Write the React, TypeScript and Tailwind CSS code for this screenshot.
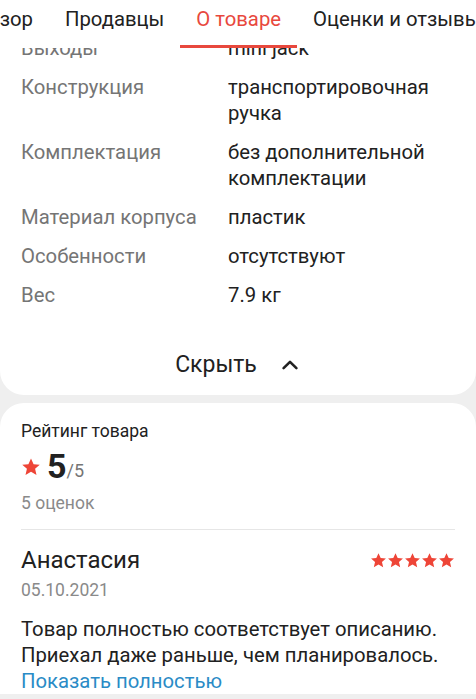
import React from 'react';

const specs: { label: string; value: string }[] = [
  { label: 'Выходы', value: 'mini jack' },
  { label: 'Конструкция', value: 'транспортировочная ручка' },
  { label: 'Комплектация', value: 'без дополнительной комплектации' },
  { label: 'Материал корпуса', value: 'пластик' },
  { label: 'Особенности', value: 'отсутствуют' },
  { label: 'Вес', value: '7.9 кг' },
];

function Star({ className }: { className?: string }) {
  return (
    <svg viewBox="0 0 24 24" className={className} fill="currentColor">
      <polygon points="12,1.8 15.1,8.6 22.5,9.3 16.9,14.2 18.6,21.5 12,17.6 5.4,21.5 7.1,14.2 1.5,9.3 8.9,8.6" />
    </svg>
  );
}

export default function App() {
  return (
    <div
      className="w-[476px] h-[699px] overflow-hidden bg-[#efefef] text-[#212121]"
      style={{ fontFamily: 'Roboto, "Noto Sans", sans-serif' }}
    >
      {/* tabs, scrolled so the first one is cut at the left edge */}
      <div className="relative z-10 h-[48px] bg-white flex items-stretch overflow-hidden text-[20.3px] whitespace-nowrap">
        <div className="w-[49px] shrink-0 flex justify-end overflow-hidden">
          <div className="pr-4 pt-[4px]">Обзор</div>
        </div>
        <div className="px-4 pt-[4px] shrink-0">Продавцы</div>
        <div className="px-4 pt-[4px] shrink-0 relative text-[#e8483d]">
          О товаре
          <div className="absolute left-0 right-0 bottom-0 h-[3px] bg-[#e8483d]" />
        </div>
        <div className="px-4 pt-[4px] shrink-0">Оценки и отзывы</div>
      </div>

      {/* specs card */}
      <div className="-mt-[13px] bg-white rounded-b-[24px] px-[21px]">
        <div className="flex flex-col gap-[13px] text-[20.3px] leading-[26px]">
          {specs.map((s) => (
            <div key={s.label} className="flex">
              <div className="w-[207px] shrink-0 text-[#757575]">{s.label}</div>
              <div className="w-[215px]">{s.value}</div>
            </div>
          ))}
        </div>
        <div className="h-[87px] flex items-center justify-center gap-[22px] pt-[27px]">
          <span className="text-[23px]">Скрыть</span>
          <svg viewBox="0 0 24 24" className="w-[22px] h-[22px]" fill="none" stroke="#212121" strokeWidth="2.8" strokeLinecap="round" strokeLinejoin="round">
            <polyline points="5,15.5 12,8.5 19,15.5" />
          </svg>
        </div>
      </div>

      {/* rating card */}
      <div className="mt-[8px] bg-white rounded-t-[24px] px-[21px] pt-[16px]">
        <div className="text-[17.5px] leading-[24px]">Рейтинг товара</div>
        <div className="flex items-end mt-[6px] h-[34px]">
          <Star className="w-[20px] h-[20px] text-[#ee4537] mb-[6px]" />
          <span className="ml-[6px] text-[34px] font-bold leading-[34px]">5</span>
          <span className="text-[18px] text-[#757575] leading-[22px] mb-[1px]">/5</span>
        </div>
        <div className="mt-[8px] text-[17.5px] text-[#8a8a8a] leading-[24px]">5 оценок</div>
        <div className="mt-[14px] h-px bg-[#e6e6e6]" />

        <div className="flex items-center justify-between mt-[15px]">
          <div className="text-[24px] leading-[30px]">Анастасия</div>
          <div className="flex text-[#ee4537]">
            <Star className="w-[17px] h-[17px]" />
            <Star className="w-[17px] h-[17px]" />
            <Star className="w-[17px] h-[17px]" />
            <Star className="w-[17px] h-[17px]" />
            <Star className="w-[17px] h-[17px]" />
          </div>
        </div>
        <div className="mt-[3px] text-[17.5px] leading-[24px] text-[#8a8a8a]">05.10.2021</div>
        <div className="mt-[14px] text-[20.3px] leading-[26px]">
          Товар полностью соответствует описанию.
          <br />
          Приехал даже раньше, чем планировалось.
        </div>
        <div className="text-[20.3px] leading-[26px] text-[#2a8bc6]">Показать полностью</div>
      </div>
    </div>
  );
}
